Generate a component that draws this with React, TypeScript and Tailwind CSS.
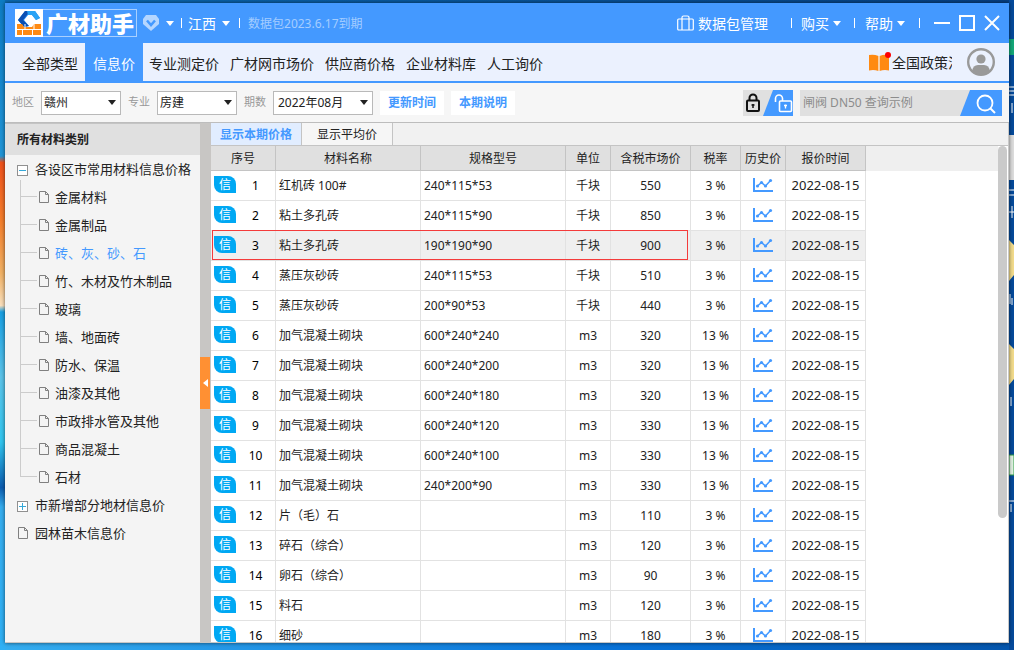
import type { ReactNode } from "react";

const regions = ["赣州"];
const specialties = ["房建"];
const periods = ["2022年08月"];

const navItems = ["专业测定价", "广材网市场价", "供应商价格", "企业材料库", "人工询价"];

const categories = [
  "金属材料",
  "金属制品",
  "砖、灰、砂、石",
  "竹、木材及竹木制品",
  "玻璃",
  "墙、地面砖",
  "防水、保温",
  "油漆及其他",
  "市政排水管及其他",
  "商品混凝土",
  "石材",
];

const rows = [
  { name: "红机砖 100#", spec: "240*115*53", unit: "千块", price: 550, tax: "3 %" },
  { name: "粘土多孔砖", spec: "240*115*90", unit: "千块", price: 850, tax: "3 %" },
  { name: "粘土多孔砖", spec: "190*190*90", unit: "千块", price: 900, tax: "3 %" },
  { name: "蒸压灰砂砖", spec: "240*115*53", unit: "千块", price: 510, tax: "3 %" },
  { name: "蒸压灰砂砖", spec: "200*90*53", unit: "千块", price: 440, tax: "3 %" },
  { name: "加气混凝土砌块", spec: "600*240*240", unit: "m3", price: 320, tax: "13 %" },
  { name: "加气混凝土砌块", spec: "600*240*200", unit: "m3", price: 320, tax: "13 %" },
  { name: "加气混凝土砌块", spec: "600*240*180", unit: "m3", price: 320, tax: "13 %" },
  { name: "加气混凝土砌块", spec: "600*240*120", unit: "m3", price: 330, tax: "13 %" },
  { name: "加气混凝土砌块", spec: "600*240*100", unit: "m3", price: 330, tax: "13 %" },
  { name: "加气混凝土砌块", spec: "240*200*90", unit: "m3", price: 330, tax: "13 %" },
  { name: "片（毛）石", spec: "", unit: "m3", price: 110, tax: "3 %" },
  { name: "碎石（综合）", spec: "", unit: "m3", price: 120, tax: "3 %" },
  { name: "卵石（综合）", spec: "", unit: "m3", price: 90, tax: "3 %" },
  { name: "料石", spec: "", unit: "m3", price: 120, tax: "3 %" },
  { name: "细砂", spec: "", unit: "m3", price: 180, tax: "3 %" },
];

const headers = ["序号", "材料名称", "规格型号", "单位", "含税市场价", "税率", "历史价", "报价时间"];
const selectedRow = 2;

function Caret({ className = "" }: { className?: string }) {
  return (
    <svg viewBox="0 0 8 5" className={`h-[5px] w-2 shrink-0 ${className}`} aria-hidden="true">
      <path d="M0 0h8L4 5z" fill="currentColor" />
    </svg>
  );
}

function Divider() {
  return <span className="h-2.5 w-px shrink-0 bg-white" />;
}

function Logo() {
  return (
    <div className="flex h-7 items-center border border-[#a9d0ff]">
      <svg viewBox="0 0 28 28" className="-my-px -ml-px h-7 w-7 shrink-0" aria-hidden="true">
        <rect width="28" height="28" fill="#fff" />
        <path d="M10 2h10l5 7-4 2-4-5h-4l-4 5 5 6-5 1-6-7z" fill="#1f86ee" />
        <path d="M10 2h5l-7 9 6 6-5 1-6-7z" fill="#0b4fb3" />
        <path d="M12 2h8l5 7-4 2-4-5h-4z" fill="#29a3f5" />
        <g fill="#ff8a12">
          <path d="M2 15h5l2 3h8l2-3h7v5H2z" />
          <rect x="2" y="21" width="5" height="5" />
          <rect x="8" y="21" width="9" height="5" />
          <rect x="18" y="21" width="8" height="5" />
        </g>
        <path d="M10 15v5M19 15v5" stroke="#fff" />
      </svg>
      <span className="pl-[3px] pr-0.5 text-[22px] font-black leading-[26px] text-white">广材助手</span>
    </div>
  );
}

function ComboBox({ label, options, wide = false }: { label: string; options: string[]; wide?: boolean }) {
  return (
    <label className="flex items-center gap-[7px] text-[11px] text-[#999]">
      {label}
      <span className={`relative flex h-6 items-center ${wide ? "w-[100px]" : "w-20"}`}>
        <select
          className={`h-6 w-full appearance-none border border-[#b9b9b9] bg-white text-xs text-[#222] outline-none ${wide ? "pl-1" : "pl-0.5"}`}
        >
          {options.map((o) => (
            <option key={o}>{o}</option>
          ))}
        </select>
        <Caret className="pointer-events-none absolute right-[5px] text-[#222]" />
      </span>
    </label>
  );
}

function FileIcon() {
  return (
    <svg viewBox="0 0 10 12" className="mb-0.5 h-3 w-2.5 shrink-0" fill="none" stroke="#808080" aria-hidden="true">
      <path d="M.5.5h6l3 3v8h-9z" />
      <path d="M6.500.5v3h3" />
    </svg>
  );
}

function ToggleBox({ open }: { open: boolean }) {
  return (
    <svg viewBox="0 0 11 11" className="h-[11px] w-[11px] shrink-0" fill="none" aria-hidden="true">
      <rect x=".5" y=".5" width="10" height="10" fill="#fff" stroke="#909090" />
      <path d={open ? "M2 5.5h7" : "M2 5.5h7M5.5 2v7"} stroke="#35a8d8" />
    </svg>
  );
}

function TreeRoot({ icon, children }: { icon: ReactNode; children: ReactNode }) {
  return (
    <button className="flex h-7 w-full items-center gap-[7px] whitespace-nowrap pl-3 text-left text-[13px]">
      <span className="flex w-[11px] justify-end">{icon}</span>
      {children}
    </button>
  );
}

function Sidebar() {
  return (
    <aside className="w-[195px] shrink-0 overflow-hidden bg-[#f4f4f4] text-[#222]">
      <h2 className="flex h-8 items-center border-t border-[#c4c4c4] bg-[#e0e0e0] pl-3 text-xs font-bold">所有材料类别</h2>
      <ul className="pt-px">
        <li>
          <TreeRoot icon={<ToggleBox open />}>各设区市常用材料信息价格</TreeRoot>
          <ul className="-mt-1 ml-[15px]">
            <li className="h-1 border-l border-[#ccc]" />
            {categories.map((c, i) => (
              <li key={c} className="flex h-7 items-center">
                <span className="flex h-7 w-[17px] shrink-0 flex-col">
                  <span className="h-[13px] border-b border-l border-[#ccc]" />
                  {i < categories.length - 1 && <span className="flex-1 border-l border-[#ccc]" />}
                </span>
                <button
                  className={`flex h-7 items-center gap-[6px] whitespace-nowrap pl-0.5 text-[13px] ${i === 2 ? "text-[#4499ff]" : ""}`}
                >
                  <FileIcon />
                  {c}
                </button>
              </li>
            ))}
          </ul>
        </li>
        <li>
          <TreeRoot icon={<ToggleBox open={false} />}>市新增部分地材信息价</TreeRoot>
        </li>
        <li>
          <TreeRoot icon={<FileIcon />}>园林苗木信息价</TreeRoot>
        </li>
      </ul>
    </aside>
  );
}

function ChartIcon() {
  return (
    <svg viewBox="0 0 20 14" className="mb-0.5 h-3.5 w-5" fill="none" stroke="#4499ff" aria-hidden="true">
      <path d="M1 0v13h19" strokeWidth="2" />
      <path d="M4.500 8L8.500 4.500L12.500 8L17.500 2.500" strokeWidth="1.500" />
      <g fill="#4499ff" stroke="none">
        <circle cx="4.500" cy="8" r="1.600" />
        <circle cx="8.500" cy="4.500" r="1.600" />
        <circle cx="12.500" cy="8" r="1.600" />
        <circle cx="17.500" cy="2.500" r="1.600" />
      </g>
    </svg>
  );
}

function MaterialTable() {
  const cell = "h-[30px] border-b border-r border-[#e2e2e2] p-0";
  return (
    <table className="w-[655px] shrink-0 table-fixed border-separate border-spacing-0 text-center text-xs text-[#222]">
      <colgroup>
        <col className="w-[65px]" />
        <col className="w-[145px]" />
        <col className="w-[145px]" />
        <col className="w-[45px]" />
        <col className="w-20" />
        <col className="w-[50px]" />
        <col className="w-[45px]" />
        <col className="w-20" />
      </colgroup>
      <thead>
        <tr>
          {headers.map((h) => (
            <th key={h} className="h-[25px] whitespace-nowrap border-b border-r border-[#c4c4c4] bg-[#e0e0e0] p-0 pt-0.5 font-normal">
              {h}
            </th>
          ))}
        </tr>
      </thead>
      <tbody>
        {rows.map((r, i) => (
          <tr key={i} className={i === selectedRow ? "bg-[#efefef]" : "bg-white"}>
            <td className={`relative ${cell}`}>
              <div className="flex items-center pl-[3px]">
                <span className="mb-0.5 flex h-[17px] w-[22px] items-center justify-center rounded-bl-lg rounded-tr-lg bg-[#00a8f3] text-xs leading-none text-white">
                  信
                </span>
                <span className="flex-1 text-black">{i + 1}</span>
              </div>
              {i === selectedRow && (
                <span className="pointer-events-none absolute -top-px left-px h-[30px] w-[476px] border border-[#f43b3b]" />
              )}
            </td>
            <td className={`${cell} pl-[3px] text-left`}>{r.name}</td>
            <td className={`${cell} pl-[3px] text-left`}>{r.spec}</td>
            <td className={cell}>{r.unit}</td>
            <td className={cell}>{r.price}</td>
            <td className={cell}>{r.tax}</td>
            <td className={cell}>
              <button className="flex w-full justify-center" aria-label="历史价">
                <ChartIcon />
              </button>
            </td>
            <td className={`${cell} whitespace-nowrap text-[13px]`}>2022-08-15</td>
          </tr>
        ))}
      </tbody>
    </table>
  );
}

function TitleBar() {
  return (
    <header className="flex h-10 shrink-0 items-center whitespace-nowrap bg-[#4499ff] pl-2.5 pr-[9px] text-sm text-white">
      <Logo />
      <button className="flex items-center gap-[7px] pl-1.5" aria-label="会员">
        <svg viewBox="0 0 16 16" className="h-4 w-4" aria-hidden="true">
          <path d="M3 0h10l3 4v5l-8 7-8-7V4z" fill="#b5d6ff" />
          <path d="M4 5.500l4 4.500 4-4.500" fill="none" stroke="#4499ff" strokeWidth="2.500" />
        </svg>
        <Caret />
      </button>
      <span className="flex items-center pl-[7px]">
        <Divider />
      </span>
      <button className="flex items-center gap-1.5 pl-1.5 pr-[9px]">
        <span className="pt-0.5">江西</span>
        <Caret />
      </button>
      <Divider />
      <span className="pl-2 pt-0.5 text-xs text-[#a5cdff]">数据包2023.6.17到期</span>
      <div className="ml-auto flex items-center">
        <button className="flex items-center gap-1">
          <svg viewBox="0 0 17 16" className="h-4 w-[17px]" fill="none" stroke="currentColor" strokeWidth="1.200" aria-hidden="true">
            <rect x=".7" y="4" width="15.600" height="11" rx="1" />
            <path d="M5 15V2.500Q5 1 6.500 1h4Q12 1 12 2.500V15" />
          </svg>
          <span className="pt-0.5">数据包管理</span>
        </button>
        <span className="flex items-center gap-[9px] pl-[23px]">
          <Divider />
          <button className="flex items-center gap-1">
            <span className="pt-0.5">购买</span>
            <Caret />
          </button>
        </span>
        <span className="flex items-center gap-2.5 pl-[13px]">
          <Divider />
          <button className="flex items-center gap-1">
            <span className="pt-0.5">帮助</span>
            <Caret />
          </button>
        </span>
        <span className="flex items-center pl-3.5 pr-3.5">
          <Divider />
        </span>
        <div className="flex items-center gap-[9px]">
          <button aria-label="最小化">
            <svg viewBox="0 0 16 16" className="h-4 w-4" aria-hidden="true">
              <path d="M0 8h16" stroke="#fff" strokeWidth="2" />
            </svg>
          </button>
          <button aria-label="最大化">
            <svg viewBox="0 0 16 16" className="h-4 w-4" aria-hidden="true">
              <rect x="1" y="1" width="14" height="14" fill="none" stroke="#fff" strokeWidth="2" />
            </svg>
          </button>
          <button aria-label="关闭">
            <svg viewBox="0 0 16 16" className="h-4 w-4" aria-hidden="true">
              <path d="M1 1l14 14M15 1L1 15" stroke="#fff" strokeWidth="2" />
            </svg>
          </button>
        </div>
      </div>
    </header>
  );
}

function NavBar() {
  return (
    <nav className="flex h-10 shrink-0 items-center whitespace-nowrap border-b-2 border-[#4499ff] bg-[#ebf1fe] text-sm text-[#222]">
      <a href="#all" className="pl-[17px] pr-[7px] pt-[3px]">全部类型</a>
      <a href="#info" className="flex h-full items-center bg-[#4499ff] px-2 pt-[3px] text-white">信息价</a>
      <div className="flex gap-[11px] pl-1.5 pt-[3px]">
        {navItems.map((n) => (
          <a key={n} href="#nav">{n}</a>
        ))}
      </div>
      <div className="ml-auto flex items-center pr-3.5">
        <a href="#policy" className="flex items-center gap-px">
          <svg viewBox="0 0 22 20" className="h-5 w-[22px]" aria-hidden="true">
            <path d="M0 3q5-1 9.500 1v15Q5 17.500 0 18.500zM10.500 4Q15 2 20 3v15.500Q15 17.500 10.500 19z" fill="#ff8a12" />
            <path d="M9.500 4h1v15h-1z" fill="#ffe0bd" />
            <circle cx="19" cy="3" r="3" fill="#f00" />
          </svg>
          <span className="w-[60px] overflow-hidden pt-0.5">全国政策法规</span>
        </a>
        <button className="ml-[15px]" aria-label="用户">
          <svg viewBox="0 0 28 28" className="h-7 w-7" aria-hidden="true">
            <circle cx="14" cy="14" r="12.800" fill="none" stroke="#999" strokeWidth="2.400" />
            <circle cx="14" cy="11" r="4.600" fill="#999" />
            <path d="M5 23q1-6 6-6h6q5 0 6 6-4 4-9 4t-9-4z" fill="#999" />
          </svg>
        </button>
      </div>
    </nav>
  );
}

function FilterBar() {
  return (
    <div className="flex h-10 shrink-0 items-center whitespace-nowrap border-b border-[#bdbdbd] bg-[#f6f6f6] pl-[7px] pr-[7px]">
      <div className="flex gap-[7px]">
        <ComboBox label="地区" options={regions} />
        <ComboBox label="专业" options={specialties} />
        <ComboBox label="期数" options={periods} wide />
        <button className="h-6 bg-white px-2 text-xs font-bold text-[#4499ff]">更新时间</button>
        <button className="h-6 bg-white px-2 text-xs font-bold text-[#4499ff]">本期说明</button>
      </div>
      <div className="ml-auto flex items-center gap-[7px]">
        <button aria-label="锁定">
          <svg viewBox="0 0 50 26" className="h-[26px] w-[50px]" fill="none" aria-hidden="true">
            <path d="M0 0h50v26H0z" fill="#e0e0e0" />
            <path d="M30 0h20v26H20z" fill="#4499ff" />
            <rect x="4" y="10.500" width="12" height="10.500" rx="1" stroke="#111" strokeWidth="2" />
            <path d="M6.500 10.500V8a3.500 3.500 0 0 1 7 0v2.500" stroke="#111" strokeWidth="2" />
            <path d="M10 14v4M8.500 15h3" stroke="#111" strokeWidth="1.500" />
            <rect x="36.500" y="11" width="12" height="10.500" rx="1" stroke="#fff" strokeWidth="1.600" />
            <path d="M32.500 12V8.500a3.500 3.500 0 0 1 7 0V11" stroke="#fff" strokeWidth="1.600" />
            <path d="M42.500 14.500v4M41 15.500h3" stroke="#fff" strokeWidth="1.300" />
          </svg>
        </button>
        <div className="flex h-[26px] w-[202px] bg-[#e0e0e0]">
          <input
            aria-label="查询"
            placeholder="闸阀 DN50 查询示例"
            className="min-w-0 flex-1 bg-transparent pl-[3px] text-xs outline-none placeholder:text-[#8c8c8c]"
          />
          <button aria-label="搜索">
            <svg viewBox="0 0 42 26" className="h-[26px] w-[42px]" fill="none" aria-hidden="true">
              <path d="M10 0h32v26H0z" fill="#4499ff" />
              <circle cx="25" cy="13" r="7.500" stroke="#fff" strokeWidth="1.800" />
              <path d="M30.500 18.500L35 23" stroke="#fff" strokeWidth="2" />
            </svg>
          </button>
        </div>
      </div>
    </div>
  );
}

function Desktop() {
  return (
    <svg viewBox="0 0 5 650" preserveAspectRatio="none" className="absolute right-0 top-0 h-full w-[5px]" aria-hidden="true">
      <rect width="5" height="650" fill="#054a9b" />
      <rect y="39" width="5" height="16" fill="#14a878" />
      <rect y="135" width="5" height="45" fill="#ddd" />
      <path d="M0 240l5 5v30l-5 6zM0 344l5 5v30l-5 6z" fill="#f3dc8c" />
      <path d="M0 455h5v20H0z" fill="#e2f3e4" stroke="#2f9b45" />
      <g stroke="#fff" strokeWidth="1">
        <path d="M0 87h5M0 91h5M0 95h5M3 103v10M0 190h5M0 195h5M3 206v12M0 212h5M1 294v10M3 298v7M2 397v9M0 501h5M2 504v8" />
      </g>
    </svg>
  );
}

export default function App() {
  return (
    <div
      lang="zh-CN"
      className="relative h-screen overflow-hidden bg-[linear-gradient(90deg,#35aef0,#0873d9_60%,#0556ad)] px-[5px] pb-[7px] pt-[3px] font-['Noto_Sans','Noto_Sans_CJK_SC',sans-serif]"
    >
      <div className="absolute inset-x-0 top-0 h-[3px] bg-[linear-gradient(90deg,#0b6cb5,#063f82)]" />
      <div className="absolute left-0 top-0 h-full w-[5px] bg-[linear-gradient(180deg,#0d7cc4_0%,#2196d8_24%,#f0521c_25%,#f57f2c_34%,#f2b265_42%,#fbe0bd_47%,#18a0e4_48%,#5cc4ea_58%,#30c6f0_68%,#0b5cb0_75%,#36aef0_78%,#2fb0f5_100%)]" />
      <Desktop />
      <main className="relative flex h-full flex-col overflow-hidden bg-white shadow-[0_0_4px_rgba(0,0,0,0.6)]">
        <TitleBar />
        <NavBar />
        <FilterBar />
        <div className="flex min-h-0 flex-1 border-b border-[#c8c6c4]">
          <Sidebar />
          <div className="flex w-[11px] shrink-0 items-center bg-[#c8c6c4]">
            <button aria-label="收起" className="flex h-[52px] w-2.5 items-center justify-center bg-[#ff9033]">
              <svg viewBox="0 0 5 8" className="h-2 w-[5px]" aria-hidden="true">
                <path d="M5 0v8L0 4z" fill="#fff" />
              </svg>
            </button>
          </div>
          <section className="flex min-w-0 flex-1 flex-col border-r border-[#c8c8c8]">
            <div className="flex h-[23px] shrink-0 border-b border-[#c4c4c4] bg-[#f1f1f1] text-xs">
              <button className="w-[91px] border-r border-[#c4c4c4] bg-[#e1edff] pt-0.5 font-bold text-[#4499ff]">显示本期价格</button>
              <button className="w-[91px] border-r border-[#c4c4c4] bg-[#f6f6f6] pt-0.5 text-[#222]">显示平均价</button>
            </div>
            <div className="flex min-h-0 flex-1 pr-px">
              <div className="flex min-w-0 flex-1 items-start self-stretch overflow-hidden">
                <MaterialTable />
                <div className="h-[25px] flex-1 bg-[#efefef]" />
              </div>
              <div className="w-[9px] shrink-0">
                <div className="h-3/4 rounded-full bg-[#cacaca]" />
              </div>
            </div>
          </section>
        </div>
      </main>
    </div>
  );
}
